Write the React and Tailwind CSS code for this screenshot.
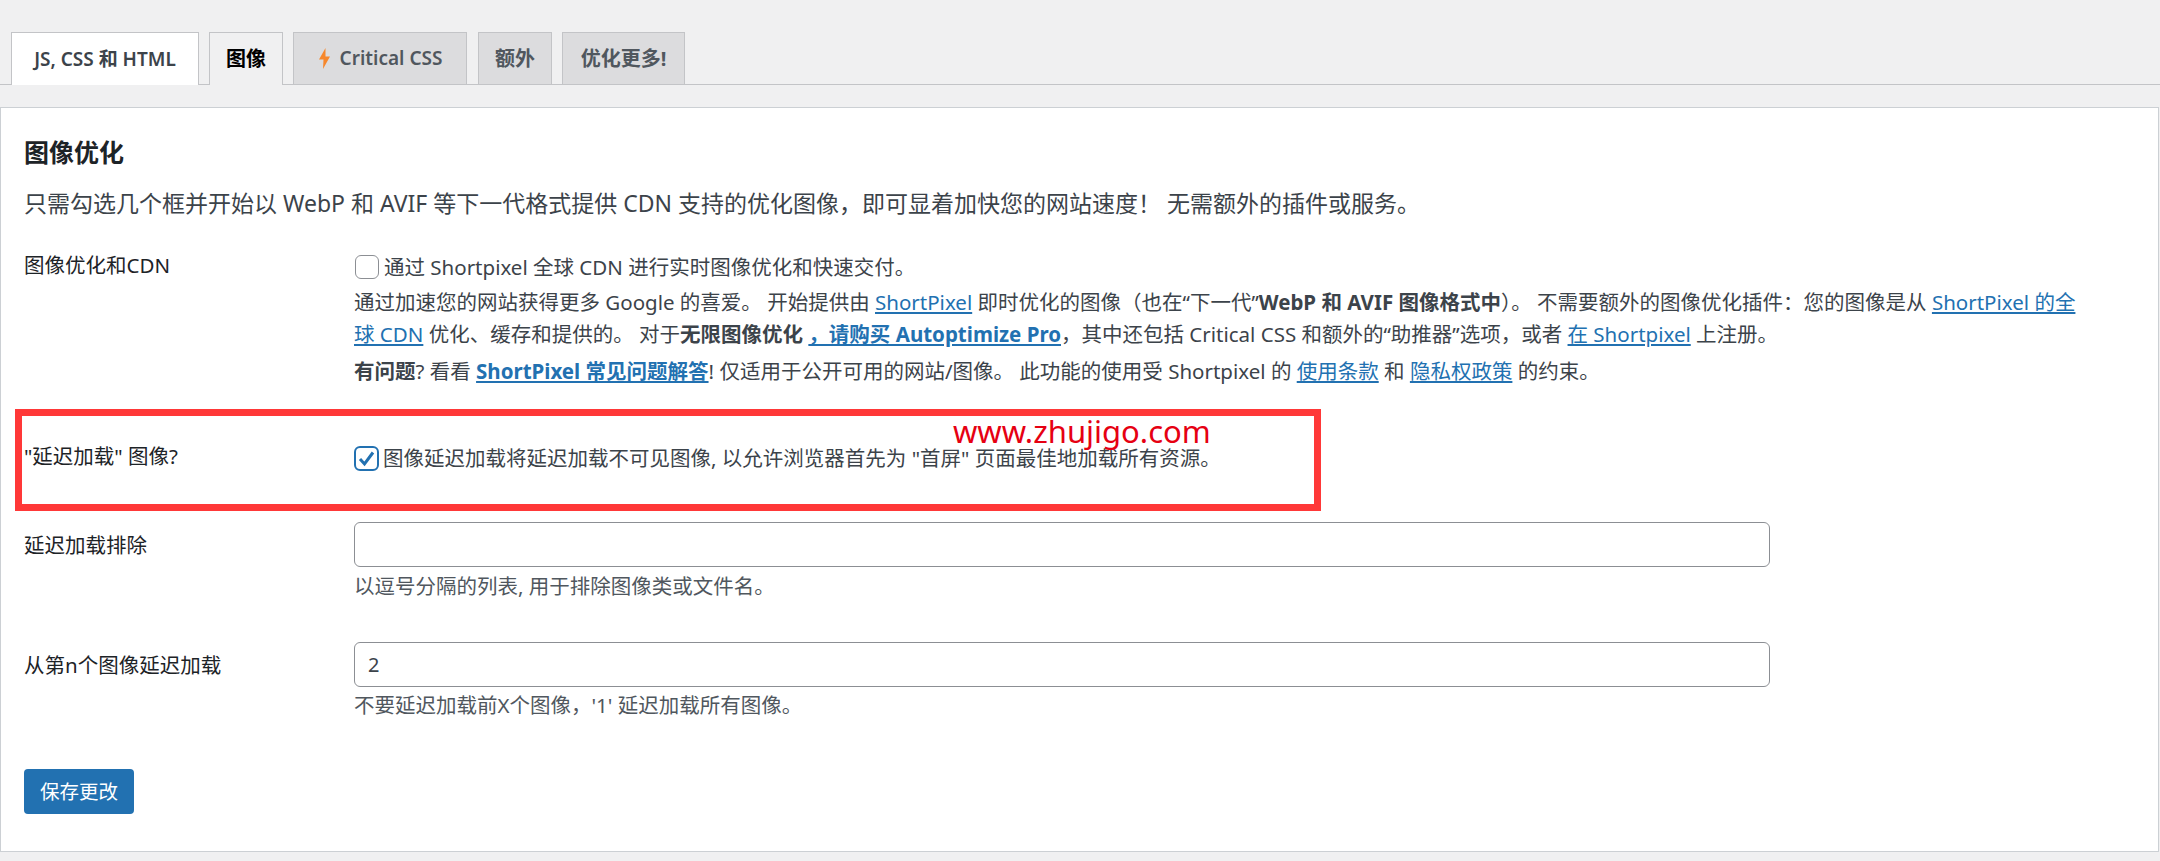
const font = "font-['Noto_Sans','Noto_Sans_CJK_SC',sans-serif]";

function Bolt() {
  return (
    <svg width="13" height="21" viewBox="0 0 13 21" className="mr-[9px] shrink-0">
      <path d="M7.5 0 L1 11.5 H5.5 L5 21 L12 8.5 H7.5 Z" fill="#f6872c" />
    </svg>
  );
}

function A({ children, bold }) {
  return <a href="#" className={"text-[#2271b1] underline " + (bold ? "font-bold" : "")}>{children}</a>;
}

function Row({ label, children, className }) {
  return (
    <div className={"grid grid-cols-[330px_1fr] " + (className || "")}>
      <div className="text-[#1d2327] text-[20.5px] leading-[28px]">{label}</div>
      <div className="text-[#3c434a] text-[20.5px] leading-[32px]">{children}</div>
    </div>
  );
}

export default function App() {
  return (
    <div className={"min-h-[861px] bg-[#f0f0f1] " + font}>
      <div className="pt-[32px] h-[85px] border-b border-[#c3c4c7] flex pl-[11px]">
        <div className="h-[53px] w-[188px] mr-[10px] flex items-center justify-center bg-white border border-[#c3c4c7] border-b-0 text-[#3c434a] text-[19px] font-semibold">JS, CSS 和 HTML</div>
        <div className="h-[53px] w-[74px] mr-[10px] flex items-center justify-center bg-[#f0f0f1] border border-[#c3c4c7] border-b-0 text-black text-[20px] font-bold">图像</div>
        <div className="h-[52px] w-[174px] mr-[11px] flex items-center justify-center bg-[#dcdcde] border border-[#c3c4c7] border-b-0 text-[#50575e] text-[19px] font-semibold"><Bolt />Critical CSS</div>
        <div className="h-[52px] w-[74px] mr-[10px] flex items-center justify-center bg-[#dcdcde] border border-[#c3c4c7] border-b-0 text-[#50575e] text-[20px] font-bold">额外</div>
        <div className="h-[52px] w-[123px] flex items-center justify-center bg-[#dcdcde] border border-[#c3c4c7] border-b-0 text-[#50575e] text-[20px] font-bold">优化更多!</div>
      </div>
      <div className="mt-[22px] h-[745px] mr-[1px] bg-white border border-[#ccd0d4] pl-[23px] pt-[28px]">
        <h2 className="text-[#1d2327] text-[25px] leading-[32px] font-bold">图像优化</h2>
        <p className="mt-[19px] text-[#3c434a] text-[23px] leading-[32px]">只需勾选几个框并开始以 WebP 和 AVIF 等下一代格式提供 CDN 支持的优化图像，即可显着加快您的网站速度！ 无需额外的插件或服务。</p>

        <Row label="图像优化和CDN" className="mt-[32px]">
          <div className="flex items-center h-[32px]">
            <span className="w-[24px] h-[24px] bg-white border border-[#8c8f94] rounded-[6px] ml-[1px] mr-[5px]" />
            <span>通过 Shortpixel 全球 CDN 进行实时图像优化和快速交付。</span>
          </div>
          <div className="whitespace-nowrap mt-[3px]">
            通过加速您的网站获得更多 Google 的喜爱。 开始提供由 <A>ShortPixel</A> 即时优化的图像（也在“下一代”<b>WebP 和 AVIF 图像格式中</b>）。 不需要额外的图像优化插件：您的图像是从 <A>ShortPixel 的全</A><br />
            <A>球 CDN</A> 优化、缓存和提供的。 对于<b>无限图像优化</b> <A bold>，请购买 Autoptimize Pro</A>，其中还包括 Critical CSS 和额外的“助推器”选项，或者 <A>在 Shortpixel</A> 上注册。
          </div>
          <div className="whitespace-nowrap mt-[5px]">
            <b>有问题</b>? 看看 <A bold>ShortPixel 常见问题解答</A>! 仅适用于公开可用的网站/图像。 此功能的使用受 Shortpixel 的 <A>使用条款</A> 和 <A>隐私权政策</A> 的约束。
          </div>
        </Row>

        <div className="relative mt-[22px] h-[102px]">
          <div className="absolute left-[-9px] top-0 w-[1306px] h-[102px] border-[7px] border-[#ff3838]" />
          <div className="absolute left-[929px] top-[0px] text-[#e60012] text-[31px] leading-[44px] whitespace-nowrap">www.zhujigo.com</div>
          <div className="grid grid-cols-[330px_1fr] pt-[33px]">
            <div className="text-[#1d2327] text-[20.5px] leading-[28px]">"延迟加载" 图像?</div>
            <div className="flex items-center h-[32px] text-[#3c434a] text-[20.5px]">
              <span className="w-[25px] h-[25px] bg-white border-2 border-[#2271b1] rounded-[6px] flex items-center justify-center mr-[4px] shrink-0">
                <svg width="17" height="17" viewBox="0 0 17 17"><path d="M2 9 L6.5 14 L15 2.5" fill="none" stroke="#2271b1" strokeWidth="3" /></svg>
              </span>
              <span>图像延迟加载将延迟加载不可见图像, 以允许浏览器首先为 "首屏" 页面最佳地加载所有资源。</span>
            </div>
          </div>
        </div>

        <div className="grid grid-cols-[330px_1fr] mt-[11px]">
          <div className="text-[#1d2327] text-[20.5px] leading-[28px] pt-[9px]">延迟加载排除</div>
          <div>
            <input className="block w-[1416px] h-[45px] bg-white border border-[#8c8f94] rounded-[6px] px-[13px] text-[#3c434a] text-[20px] outline-none" defaultValue="" />
            <div className="text-[#50575e] text-[20.5px] leading-[32px] mt-[3px]">以逗号分隔的列表, 用于排除图像类或文件名。</div>
          </div>
        </div>

        <div className="grid grid-cols-[330px_1fr] mt-[40px]">
          <div className="text-[#1d2327] text-[20.5px] leading-[28px] pt-[9px]">从第n个图像延迟加载</div>
          <div>
            <input className="block w-[1416px] h-[45px] bg-white border border-[#8c8f94] rounded-[6px] px-[13px] text-[#3c434a] text-[20px] outline-none" defaultValue="2" />
            <div className="text-[#50575e] text-[20.5px] leading-[32px] mt-[2px]">不要延迟加载前X个图像，'1' 延迟加载所有图像。</div>
          </div>
        </div>

        <button className="mt-[48px] w-[110px] h-[45px] bg-[#2271b1] text-white text-[19.5px] rounded-[4px]">保存更改</button>
      </div>
    </div>
  );
}
